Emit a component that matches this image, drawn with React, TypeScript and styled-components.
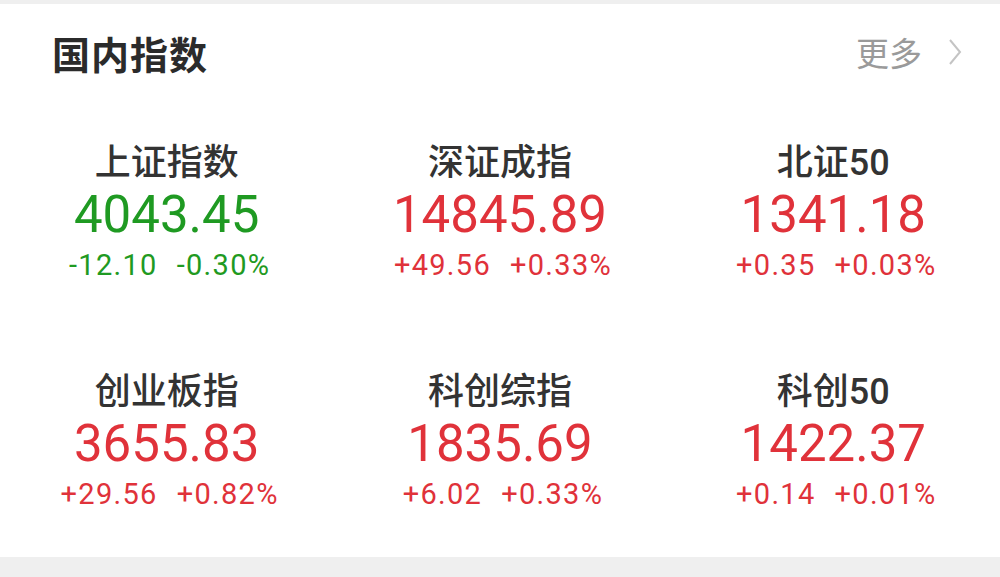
import styled, { createGlobalStyle } from 'styled-components';

const GlobalStyle = createGlobalStyle`
    html, body {
        margin: 0;
        padding: 0;
        background: #f5f5f5;
    }
    body {
        font-family: "Roboto", "Noto Sans CJK SC", sans-serif;
    }
`;

const Page = styled.div`
    width: 1000px;
    height: 577px;
    padding-top: 4px;
    box-sizing: border-box;
    background: #efefef;
`;

const Card = styled.div`
    background: #ffffff;
    height: 553px;
    display: flex;
    flex-direction: column;
`;

const Header = styled.div`
    height: 96px;
    padding: 0 38px 0 52px;
    display: flex;
    flex-direction: row;
    justify-content: space-between;
    align-items: center;
`;

const Title = styled.h2`
    margin: 0;
    font-family: "Noto Sans CJK SC", sans-serif;
    font-size: 38px;
    font-weight: 700;
    color: #2b2b2b;
    letter-spacing: 1px;
`;

const More = styled.div`
    display: flex;
    align-items: center;
    gap: 26px;
    font-family: "Noto Sans CJK SC", sans-serif;
    font-size: 33px;
    color: #9a9a9a;
`;

const Grid = styled.div`
    display: grid;
    grid-template-columns: repeat(3, 1fr);
    row-gap: 44px;
`;

const Cell = styled.div`
    padding-top: 41px;
    display: flex;
    flex-direction: column;
    align-items: center;
`;

const Name = styled.div`
    height: 44px;
    line-height: 44px;
    font-family: "Roboto", "Noto Sans CJK SC", sans-serif;
    font-size: 36px;
    font-weight: 500;
    color: #333333;
`;

const Price = styled.div<{ $up: boolean }>`
    height: 60px;
    line-height: 60px;
    font-size: 51px;
    font-weight: 400;
    color: ${p => (p.$up ? '#e0323a' : '#1f9a22')};
`;

const Change = styled.div<{ $up: boolean }>`
    height: 40px;
    line-height: 40px;
    font-size: 29px;
    letter-spacing: 1.3px;
    padding-left: 6px;
    display: flex;
    gap: 19px;
    color: ${p => (p.$up ? '#e0323a' : '#1f9a22')};
`;

const indices = [
    { name: '上证指数', price: '4043.45', diff: '-12.10', pct: '-0.30%' },
    { name: '深证成指', price: '14845.89', diff: '+49.56', pct: '+0.33%' },
    { name: '北证50', price: '1341.18', diff: '+0.35', pct: '+0.03%' },
    { name: '创业板指', price: '3655.83', diff: '+29.56', pct: '+0.82%' },
    { name: '科创综指', price: '1835.69', diff: '+6.02', pct: '+0.33%' },
    { name: '科创50', price: '1422.37', diff: '+0.14', pct: '+0.01%' },
];

function Chevron() {
    return (
        <svg width="14" height="28" viewBox="0 0 14 28">
            <polyline points="2,2 12,14 2,26" fill="none" stroke="#c4c4c4" strokeWidth="2" />
        </svg>
    );
}

function App() {
    return (
        <Page>
            <GlobalStyle />
            <Card>
                <Header>
                    <Title>国内指数</Title>
                    <More>
                        更多
                        <Chevron />
                    </More>
                </Header>
                <Grid>
                    {indices.map(item => {
                        const up = !item.diff.startsWith('-');
                        return (
                            <Cell key={item.name}>
                                <Name>{item.name}</Name>
                                <Price $up={up}>{item.price}</Price>
                                <Change $up={up}>
                                    <span>{item.diff}</span>
                                    <span>{item.pct}</span>
                                </Change>
                            </Cell>
                        );
                    })}
                </Grid>
            </Card>
        </Page>
    );
}

export default App;
